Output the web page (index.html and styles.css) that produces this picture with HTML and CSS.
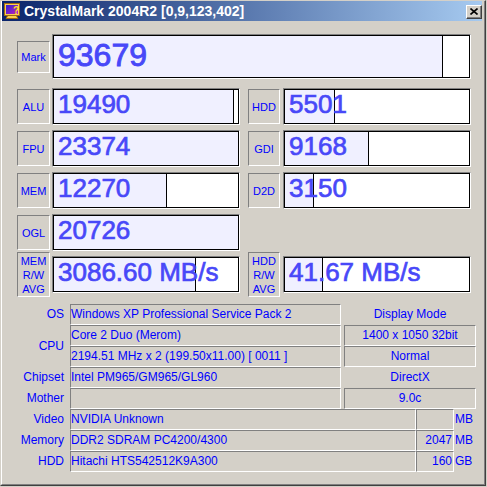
FILE: index.html
```html
<!DOCTYPE html>
<html>
<head>
<meta charset="utf-8">
<title>CrystalMark 2004R2</title>
<link rel="stylesheet" href="styles.css">
</head>
<body>
<div class="window">
  <div class="frame">
    <div class="titlebar">
      <svg class="appicon" width="16" height="16" viewBox="0 0 16 16">
        <defs>
          <linearGradient id="scr" x1="0" y1="0" x2="1" y2="1">
            <stop offset="0" stop-color="#3020d0"/>
            <stop offset="1" stop-color="#c020c0"/>
          </linearGradient>
        </defs>
        <polygon points="4,12 12,12 14,15.5 2,15.5" fill="#f8d050" stroke="#a06810" stroke-width="1"/>
        <rect x="0.5" y="0.5" width="15" height="12" fill="#f8d050" stroke="#a06810"/>
        <rect x="2" y="2" width="12" height="9" fill="url(#scr)"/>
        <text x="9" y="11" font-family="Liberation Sans, sans-serif" font-weight="bold" font-size="10" fill="#ffe020">?</text>
      </svg>
      <span class="title">CrystalMark 2004R2 [0,9,123,402]</span>
      <div class="closebtn">
        <svg width="8" height="7" viewBox="0 0 8 7"><path d="M0.5 0.5 L7.5 6.5 M7.5 0.5 L0.5 6.5" stroke="#000" stroke-width="1.6" fill="none"/></svg>
      </div>
    </div>

    <div class="content">
      <div class="markrow">
        <div class="lab mark">Mark</div>
        <div class="bar big"><div class="bar-in" style="--p:388px">93679</div></div>
      </div>

      <div class="bench">
        <div class="lab">ALU</div>
        <div class="bar"><div class="bar-in" style="--p:179px">19490</div></div>
        <div class="lab r">HDD</div>
        <div class="bar"><div class="bar-in" style="--p:49px">5501</div></div>

        <div class="lab">FPU</div>
        <div class="bar"><div class="bar-in" style="--p:100%">23374</div></div>
        <div class="lab r">GDI</div>
        <div class="bar"><div class="bar-in" style="--p:83px">9168</div></div>

        <div class="lab">MEM</div>
        <div class="bar"><div class="bar-in" style="--p:112px">12270</div></div>
        <div class="lab r">D2D</div>
        <div class="bar"><div class="bar-in" style="--p:28px">3150</div></div>

        <div class="lab">OGL</div>
        <div class="bar"><div class="bar-in" style="--p:100%">20726</div></div>
        <div class="empty"></div>
        <div class="empty"></div>

        <div class="lab tall">MEM<br>R/W<br>AVG</div>
        <div class="bar"><div class="bar-in" style="--p:141px">3086.60 MB/s</div></div>
        <div class="lab r tall">HDD<br>R/W<br>AVG</div>
        <div class="bar"><div class="bar-in" style="--p:37px">41.67 MB/s</div></div>
      </div>

      <div class="info">
        <div class="ilabel">OS</div>
        <div class="field">Windows XP Professional Service Pack 2</div>
        <div class="ptext">Display Mode</div>

        <div class="ilabel cpu">CPU</div>
        <div class="field">Core 2 Duo (Merom)</div>
        <div class="pbox">1400 x 1050 32bit</div>
        <div class="field">2194.51 MHz x 2 (199.50x11.00) [ 0011 ]</div>
        <div class="pbox">Normal</div>

        <div class="ilabel">Chipset</div>
        <div class="field">Intel PM965/GM965/GL960</div>
        <div class="ptext">DirectX</div>

        <div class="ilabel">Mother</div>
        <div class="field"></div>
        <div class="pbox">9.0c</div>
      </div>

      <div class="info2">
        <div class="ilabel">Video</div>
        <div class="field wide">NVIDIA Unknown</div>
        <div class="num"></div>
        <div class="unit">MB</div>

        <div class="ilabel">Memory</div>
        <div class="field wide">DDR2 SDRAM PC4200/4300</div>
        <div class="num">2047</div>
        <div class="unit">MB</div>

        <div class="ilabel">HDD</div>
        <div class="field wide">Hitachi HTS542512K9A300</div>
        <div class="num">160</div>
        <div class="unit">GB</div>
      </div>
    </div>
  </div>
</div>
</body>
</html>
```
FILE: styles.css
```css
* { box-sizing: border-box; }
html, body { margin: 0; padding: 0; }
body {
  width: 487px;
  height: 487px;
  overflow: hidden;
  background: #d4d0c8;
  font-family: "Liberation Sans", Arial, sans-serif;
}
.window {
  width: 486px;
  height: 486px;
  border-top: 1px solid #d4d0c8;
  border-left: 1px solid #d4d0c8;
  border-right: 1px solid #404040;
  border-bottom: 1px solid #404040;
}
.frame {
  height: 100%;
  border-left: 1px solid #ffffff;
  border-right: 1px solid #808080;
  border-bottom: 1px solid #808080;
  padding-right: 2px;
}
.titlebar {
  height: 20px;
  display: flex;
  align-items: center;
  background: linear-gradient(to right, #0a246a, #a6caf0);
}
.appicon { margin-left: 2px; flex: none; }
.title {
  margin-left: 4px;
  color: #fff;
  font-weight: bold;
  font-size: 14px;
  white-space: nowrap;
}
.closebtn {
  margin-left: auto;
  margin-top: 2px;
  width: 16px;
  height: 14px;
  background: #d4d0c8;
  border-top: 1px solid #fff;
  border-left: 1px solid #fff;
  border-right: 1px solid #404040;
  border-bottom: 1px solid #404040;
  box-shadow: inset -1px -1px 0 #808080;
  display: flex;
  align-items: center;
  justify-content: center;
  padding: 0 1px 1px 0;
}
.closebtn svg { display: block; }

.content { padding: 13px 0 0 15px; }

.lab {
  width: 33px;
  height: 35px;
  border: 1px solid;
  border-color: #808080 #ffffff #ffffff #808080;
  color: #0000ff;
  font-size: 11px;
  display: flex;
  align-items: center;
  justify-content: center;
  text-align: center;
  line-height: 14px;
}
.lab.r { width: 32px; }
.lab.mark { height: 32px; }
.lab.tall { height: 45px; }

.markrow {
  display: flex;
  align-items: center;
  height: 45px;
}
.bar {
  width: 188px;
  height: 37px;
  border: 1px solid;
  border-color: #808080 #ffffff #ffffff #808080;
}
.bar.big {
  width: 419px;
  height: 45px;
  margin-left: 2px;
}
.bar-in {
  height: 100%;
  border: 1px solid #000;
  background: linear-gradient(to right,
    #f0f0ff var(--p), #000 var(--p), #000 calc(var(--p) + 1px), #fff calc(var(--p) + 1px));
  color: #4848f8;
  -webkit-text-stroke: 0.7px #4848f8;
  font-size: 26px;
  line-height: 28px;
  padding-left: 4px;
  white-space: nowrap;
  overflow: hidden;
}
.bar.big .bar-in {
  font-size: 32px;
  line-height: 38px;
  -webkit-text-stroke: 0.9px #4848f8;
}

.bench {
  margin-top: 9px;
  display: grid;
  grid-template-columns: 35px 196px 35px 188px;
  grid-auto-rows: 37px;
  row-gap: 5px;
  align-items: center;
}

.info {
  margin-top: 11px;
  display: grid;
  grid-template-columns: 53px 274px 132px;
  grid-auto-rows: 21px;
  color: #0000ff;
  font-size: 12px;
}
.info2 {
  display: grid;
  grid-template-columns: 53px 346px 38px 32px;
  grid-auto-rows: 21px;
  color: #0000ff;
  font-size: 12px;
}
.ilabel {
  text-align: right;
  padding-right: 6px;
  line-height: 21px;
  white-space: nowrap;
}
.ilabel.cpu {
  grid-row: span 2;
  align-self: center;
}
.field {
  width: 271px;
  height: 21px;
  border: 1px solid;
  border-color: #808080 #ffffff #ffffff #808080;
  line-height: 19px;
  white-space: nowrap;
  overflow: hidden;
}
.field.wide { width: 346px; }
.ptext {
  text-align: center;
  line-height: 21px;
}
.pbox {
  height: 21px;
  border: 1px solid;
  border-color: #808080 #ffffff #ffffff #808080;
  line-height: 19px;
  text-align: center;
  white-space: nowrap;
}
.num {
  height: 21px;
  border: 1px solid;
  border-color: #808080 #ffffff #ffffff #808080;
  line-height: 19px;
  text-align: right;
  padding-right: 1px;
}
.unit {
  padding-left: 1px;
  line-height: 21px;
}
```
